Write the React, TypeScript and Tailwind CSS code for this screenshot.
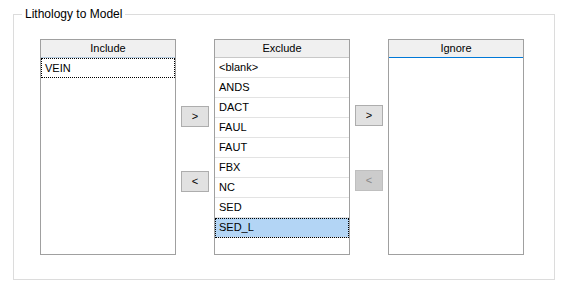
import React from "react";

type ListProps = {
  title: string;
  items: string[];
  focused?: string;
  selected?: string;
  headerLine: string;
  separators?: boolean;
};

function ListBox({ title, items, focused, selected, headerLine, separators }: ListProps) {
  return (
    <div className="flex h-[216px] w-[136px] flex-col border border-[#a0a0a0] bg-white">
      <div
        className={`flex h-[18px] shrink-0 items-center justify-center border-b bg-[#f0f0f0] text-black ${headerLine}`}
      >
        {title}
      </div>
      <div className="flex flex-col">
        {items.map((it) => {
          const isSel = it === selected;
          const isFocus = it === focused || isSel;
          return (
            <div
              key={it}
              className={`flex h-[20px] items-center pl-[4px] ${
                separators ? "border-b border-[#e3e3e3]" : ""
              } ${isSel ? "bg-[#b3d5f5]" : ""} ${
                isFocus ? "outline-1 outline-dotted outline-black -outline-offset-1" : ""
              }`}
            >
              {it}
            </div>
          );
        })}
      </div>
    </div>
  );
}

function MoveButton({ label, disabled }: { label: string; disabled?: boolean }) {
  return (
    <button
      className={`flex h-[21px] w-[28px] items-center justify-center border text-[11px] ${
        disabled
          ? "border-[#bfbfbf] bg-[#cccccc] text-[#8a8a8a]"
          : "border-[#adadad] bg-[#e1e1e1] text-black"
      }`}
    >
      {label}
    </button>
  );
}

export default function App() {
  const exclude = ["<blank>", "ANDS", "DACT", "FAUL", "FAUT", "FBX", "NC", "SED", "SED_L"];
  return (
    <div
      className="h-[290px] w-[570px] bg-white pl-[13px] pt-[14px] text-[11px] text-black"
      style={{ fontFamily: '"Liberation Sans", Arial, sans-serif' }}
    >
      {/* Group box */}
      <div className="relative h-[266px] w-[542px] border border-[#dcdcdc] pl-[26px] pt-[24px]">
        <span className="absolute -top-[8px] left-[8px] bg-white px-[3px] text-[12px] leading-[14px]">
          Lithology to Model
        </span>

        <div className="flex gap-[5px]">
          <ListBox title="Include" items={["VEIN"]} focused="VEIN" headerLine="border-[#b9cde0]" />

          <div className="flex flex-col pt-[67px]">
            <MoveButton label=">" />
            <div className="h-[44px]" />
            <MoveButton label="<" />
          </div>

          <ListBox
            title="Exclude"
            items={exclude}
            selected="SED_L"
            headerLine="border-[#c8c8c8]"
            separators
          />

          <div className="flex flex-col pt-[66px]">
            <MoveButton label=">" />
            <div className="h-[44px]" />
            <MoveButton label="<" disabled />
          </div>

          <ListBox title="Ignore" items={[]} headerLine="border-[#0078d7]" />
        </div>
      </div>
    </div>
  );
}
